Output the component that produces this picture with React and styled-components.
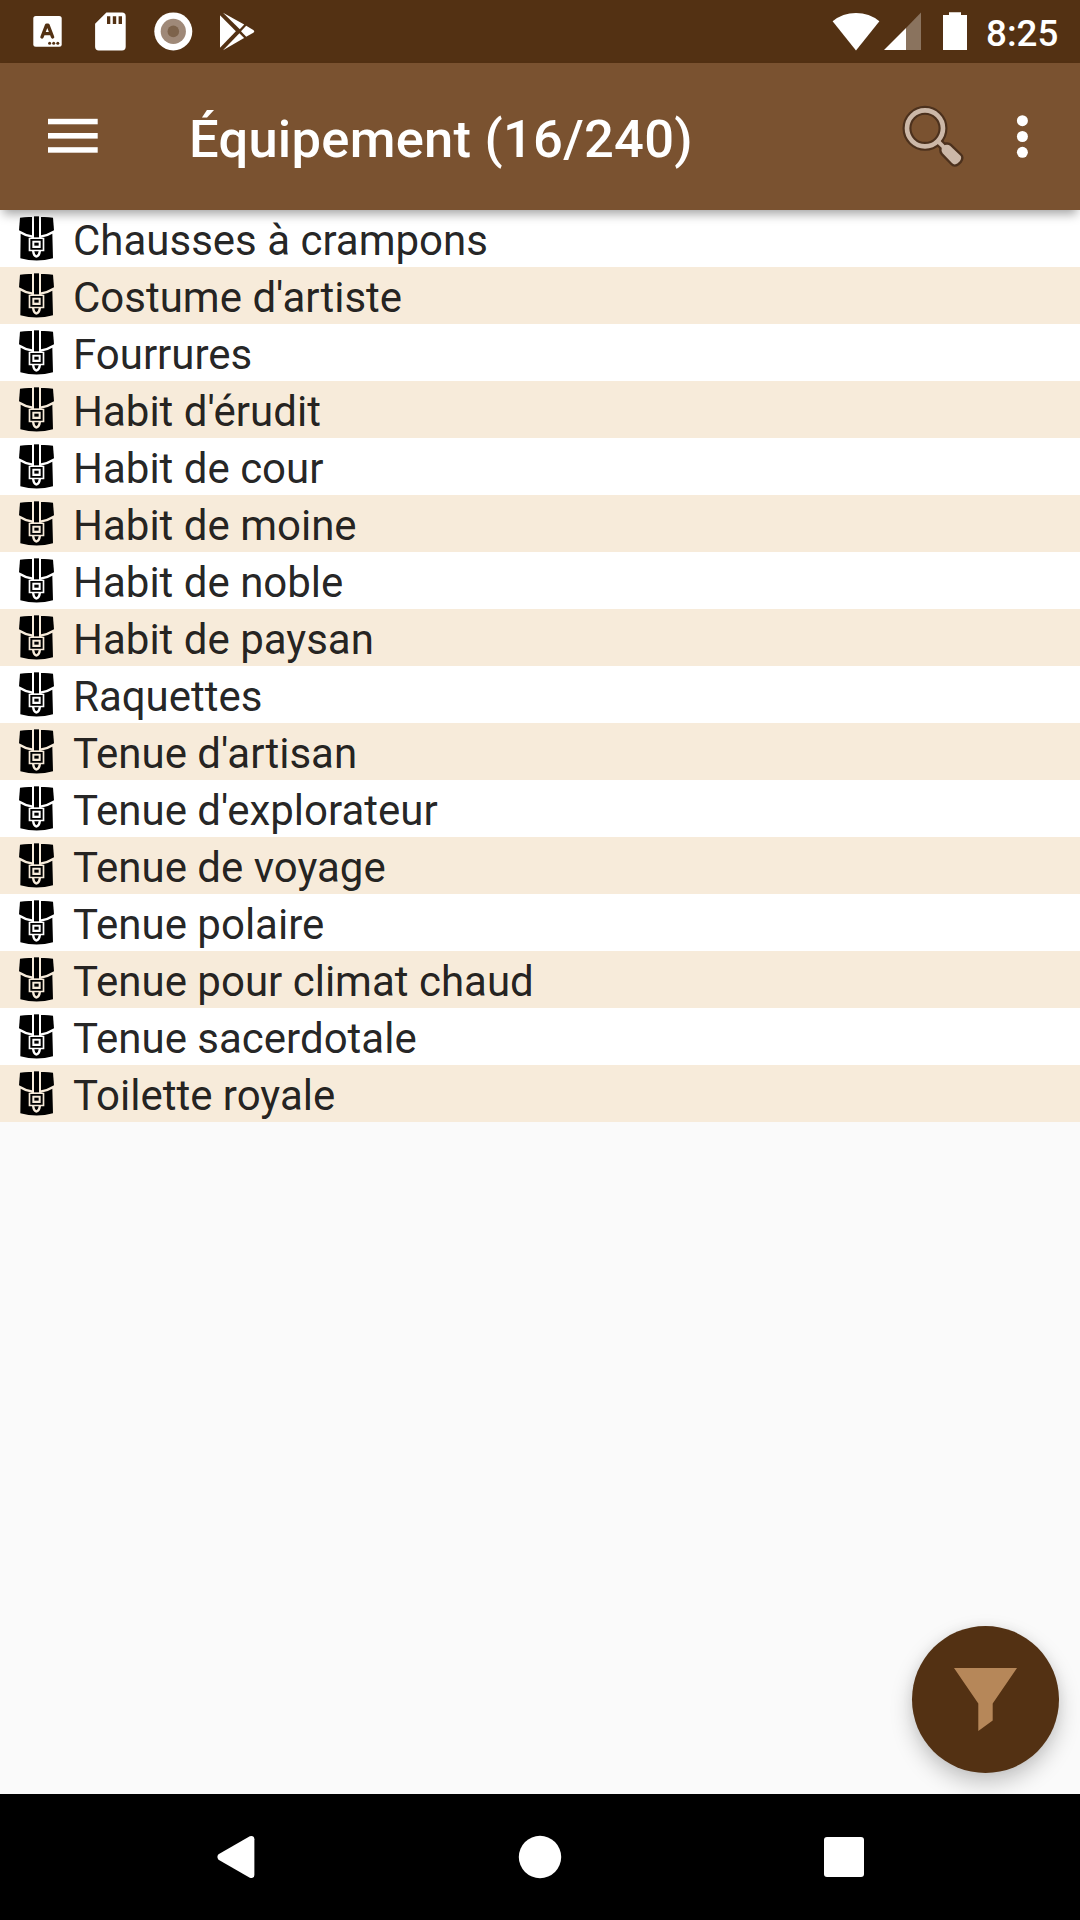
import React from "react";
import styled, { createGlobalStyle } from "styled-components";

const GlobalStyle = createGlobalStyle`
  *, *::before, *::after { box-sizing: border-box; }
  body { margin: 0; background: #fafafa; }
  svg { display: block; flex: none; }
`;

const Screen = styled.div`
  display: flex;
  flex-direction: column;
  width: 1080px;
  height: 1920px;
  overflow: hidden;
  background: #fafafa;
  font-family: Roboto, "Noto Sans", sans-serif;
`;

const StatusBar = styled.header`
  display: flex;
  justify-content: space-between;
  flex: none;
  height: 63px;
  padding: 0 21px 0 16px;
  background: #533113;
  color: #fff;
`;

const StatusGroup = styled.div`
  display: flex;
  align-items: center;
`;

const Clock = styled.time`
  width: 73px;
  padding-top: 4px;
  margin-left: 16px;
  font-size: 36.75px;
  font-weight: 500;
  line-height: 59px;
  white-space: nowrap;
`;

const AppBar = styled.div`
  position: relative;
  z-index: 1;
  display: flex;
  align-items: center;
  flex: none;
  height: 147px;
  padding-right: 31px;
  background: #7a5230;
  color: #fff;
  box-shadow: 0 7px 10px -3px rgba(0, 0, 0, 0.36);
`;

const IconButton = styled.button`
  display: flex;
  align-items: center;
  justify-content: center;
  flex: none;
  width: ${(p) => p.$width}px;
  height: 147px;
  padding: 0;
  border: 0;
  background: none;
  color: inherit;
`;

const Title = styled.h1`
  flex: 1;
  margin: 0 0 0 43px;
  padding-top: 4px;
  font-size: 52.5px;
  font-weight: 500;
  letter-spacing: 0.26px;
  line-height: 62px;
  white-space: nowrap;
`;

const Content = styled.main`
  position: relative;
  flex: 1;
  min-height: 0;
`;

const List = styled.ul`
  margin: 0;
  padding: 0;
  list-style: none;
`;

const Row = styled.li`
  display: flex;
  align-items: center;
  height: 57px;
  padding-left: 18px;
  background: ${(p) => (p.$shaded ? "#f7ebda" : "#fff")};
`;

const RowLabel = styled.span`
  margin-left: 18px;
  padding-top: 4px;
  color: rgba(0, 0, 0, 0.87);
  font-size: 42px;
  line-height: 53px;
  white-space: nowrap;
`;

const FilterButton = styled.button`
  position: absolute;
  right: 21px;
  bottom: 21px;
  display: flex;
  align-items: center;
  justify-content: center;
  width: 147px;
  height: 147px;
  padding: 0;
  border: 0;
  border-radius: 50%;
  background: #533113;
  box-shadow: 0 10px 22px rgba(0, 0, 0, 0.22), 0 0 12px rgba(0, 0, 0, 0.05);
`;

const NavBar = styled.nav`
  position: relative;
  z-index: 1;
  display: flex;
  justify-content: center;
  align-items: center;
  flex: none;
  height: 126px;
  background: #000;
`;

const NavButton = styled.button`
  display: flex;
  align-items: center;
  justify-content: center;
  width: 304px;
  height: 126px;
  padding: 0;
  border: 0;
  background: none;
`;

const KeyboardIcon = () => (
  <svg width="63" height="63" viewBox="0 0 63 63">
    <rect x="17.3" y="16" width="28.4" height="30.8" rx="2.5" fill="#fff" />
    <path d="M26 37 30.6 25.2H32L36.6 37M28 33.6H34.6" fill="none" stroke="#533113" strokeWidth="3.4" strokeLinecap="round" strokeLinejoin="round" />
    <circle cx="33.6" cy="43.2" r="1.5" fill="#533113" />
    <circle cx="37.7" cy="43.2" r="1.5" fill="#533113" />
    <circle cx="41.8" cy="43.2" r="1.5" fill="#533113" />
  </svg>
);

const SdCardIcon = () => (
  <svg width="63" height="63" viewBox="0 0 63 63">
    <path fillRule="evenodd" fill="#fff" d="M27.4 12.5H43a3.7 3.7 0 0 1 3.7 3.7V46.8a3.7 3.7 0 0 1-3.7 3.7H19.8a3.7 3.7 0 0 1-3.7-3.7V23.8ZM28 16.3V24h3.3v-7.7ZM33.8 16.3V24h3.4v-7.7ZM39.6 16.3V24H43v-7.7Z" />
  </svg>
);

const RecordIcon = () => (
  <svg width="63" height="63" viewBox="0 0 63 63">
    <circle cx="31.3" cy="31.4" r="19" fill="#fff" />
    <circle cx="31.3" cy="31.4" r="12.6" fill="#9f8978" />
    <circle cx="31.3" cy="31.4" r="5.8" fill="#7d634b" />
  </svg>
);

const PlayStoreIcon = () => (
  <svg width="63" height="63" viewBox="0 0 63 63" fill="#fff">
    <path d="M15 15.2 30.9 31.3 15 47.8Z" />
    <path d="M18 12.7 39.2 24.6 34.8 29.2Z" />
    <path d="M41.2 25.8 48.3 29.9Q50.2 31.3 48.3 32.7L41.2 36.8 36 31.3Z" />
    <path d="M18 50.2 34.4 33.2 39.1 38.1Z" />
  </svg>
);

const WifiIcon = () => (
  <svg width="56" height="63" viewBox="828 0 56 63">
    <path d="M856 50.4 832.6 21.2Q842.7 13 856 13T879.4 21.2Z" fill="#fff" />
  </svg>
);

const SignalIcon = () => (
  <svg width="50" height="63" viewBox="884 0 50 63">
    <path d="M921 12.6V50H906V28Z" fill="#fff" fillOpacity=".32" />
    <path d="M884 50 906 28V50Z" fill="#fff" />
  </svg>
);

const BatteryIcon = () => (
  <svg width="36" height="63" viewBox="934 0 36 63">
    <path d="M949 12.3H961V15H967V50H943V15H949Z" fill="#fff" />
  </svg>
);

const MenuIcon = () => (
  <svg width="50" height="37" viewBox="0 0 50 37" fill="#fff">
    <rect y="0.8" width="49.7" height="5.5" />
    <rect y="15" width="49.7" height="5.6" />
    <rect y="29.2" width="49.7" height="5.5" />
  </svg>
);

const SearchIcon = () => (
  <svg width="64" height="63" viewBox="63 75 192 189">
    <g fill="none" stroke="#4c311d">
      <circle cx="135" cy="145" r="54" strokeWidth="27" />
      <path d="M173 183 195 205" strokeWidth="25" />
    </g>
    <path d="M185 200 198 194Q206 193 210 197L240 226Q247 232 240 243L233 250Q223 257 216 249L188 220Q183 214 185 207Z" fill="#4c311d" stroke="#4c311d" strokeWidth="14" strokeLinejoin="round" />
    <circle cx="135" cy="145" r="54" fill="none" stroke="#ccb8a8" strokeWidth="14" />
    <path d="M173 183 195 205" stroke="#ccb8a8" strokeWidth="12" />
    <path d="M185 205 195 195Q205 193 210 197L240 226Q247 232 240 243L233 250Q223 257 216 249L188 220Q183 214 185 205Z" fill="#ccb8a8" />
  </svg>
);

const MoreIcon = () => (
  <svg width="13" height="43" viewBox="0 0 13 43" fill="#fff">
    <circle cx="6.4" cy="5.7" r="5.5" />
    <circle cx="6.4" cy="21.5" r="5.5" />
    <circle cx="6.4" cy="37.3" r="5.5" />
  </svg>
);

const BackpackIcon = () => (
  <svg width="37" height="57" viewBox="54 15 111 171">
    <path d="M60 38Q77 35 96 36V91Q77 88 57 76Z" />
    <path d="M123 36Q142 35 159 38L162 76Q142 88 123 91Z" />
    <path d="M102 34H117V97H102Z" />
    <path d="M62 86Q77 96 96 98H86V139H96Q98 157 109 158Q121 157 123 139H133V98H123Q142 96 157 86L159 160Q110 173 61 160Z" />
    <path fillRule="evenodd" d="M91 102H128V134H91ZM97 107V129H122V107Z" />
    <path d="M103 113H116V122H103Z" />
    <path d="M103 139H116Q115 148 109 151Q104 148 103 139Z" />
  </svg>
);

const FunnelIcon = () => (
  <svg width="63" height="63" viewBox="0 0 63 63">
    <path d="M0 0H63L38.7 35.5V52.5L24.3 63V35.5Z" fill="#b68759" />
  </svg>
);

const BackIcon = () => (
  <svg width="42" height="44" viewBox="0 0 42 44">
    <path d="M3.5 19.3 34.8 1.2Q39 0 39.4 4.2V39.8Q39 44 34.8 42.8L3.5 24.7Q1.3 22 3.5 19.3Z" fill="#fff" />
  </svg>
);

const HomeIcon = () => (
  <svg width="44" height="44" viewBox="0 0 44 44">
    <circle cx="22" cy="22" r="21.2" fill="#fff" />
  </svg>
);

const RecentsIcon = () => (
  <svg width="40" height="40" viewBox="0 0 40 40">
    <rect width="40" height="40" rx="3" fill="#fff" />
  </svg>
);

const items = [
  "Chausses à crampons",
  "Costume d'artiste",
  "Fourrures",
  "Habit d'érudit",
  "Habit de cour",
  "Habit de moine",
  "Habit de noble",
  "Habit de paysan",
  "Raquettes",
  "Tenue d'artisan",
  "Tenue d'explorateur",
  "Tenue de voyage",
  "Tenue polaire",
  "Tenue pour climat chaud",
  "Tenue sacerdotale",
  "Toilette royale",
];

export default function App() {
  return (
    <Screen>
      <GlobalStyle />
      <StatusBar>
        <StatusGroup>
          <KeyboardIcon />
          <SdCardIcon />
          <RecordIcon />
          <PlayStoreIcon />
        </StatusGroup>
        <StatusGroup>
          <WifiIcon />
          <SignalIcon />
          <BatteryIcon />
          <Clock>8:25</Clock>
        </StatusGroup>
      </StatusBar>
      <AppBar>
        <IconButton $width={146}>
          <MenuIcon />
        </IconButton>
        <Title>Équipement (16/240)</Title>
        <IconButton $width={126}>
          <SearchIcon />
        </IconButton>
        <IconButton $width={53}>
          <MoreIcon />
        </IconButton>
      </AppBar>
      <Content>
        <List>
          {items.map((name, i) => (
            <Row key={name} $shaded={i % 2 === 1}>
              <BackpackIcon />
              <RowLabel>{name}</RowLabel>
            </Row>
          ))}
        </List>
        <FilterButton>
          <FunnelIcon />
        </FilterButton>
      </Content>
      <NavBar>
        <NavButton>
          <BackIcon />
        </NavButton>
        <NavButton>
          <HomeIcon />
        </NavButton>
        <NavButton>
          <RecentsIcon />
        </NavButton>
      </NavBar>
    </Screen>
  );
}
